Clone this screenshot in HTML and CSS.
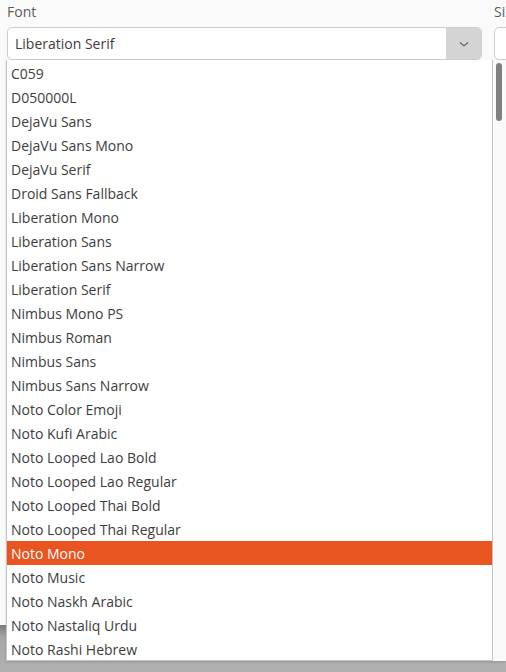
FILE: index.html
```html
<!DOCTYPE html>
<html>
<head>
    <link rel="stylesheet" href="styles.css">
</head>
<body>
    <div class="dialog">
        <div class="fields">
            <div class="field field-font">
                <div class="label">Font</div>
                <div class="combo">
                    <div class="combo-value">Liberation Serif</div>
                    <div class="combo-button">
                        <svg width="12" height="8" viewBox="0 0 12 8"><path d="M2 2.5 L6 5.8 L10 2.5" fill="none" stroke="#555" stroke-width="1.1"/></svg>
                    </div>
                </div>
            </div>
            <div class="field field-size">
                <div class="label">Size</div>
                <div class="combo combo-small"></div>
            </div>
        </div>
        <div class="lower"></div>
    </div>

    <!-- 字体下拉列表 -->
    <div class="popup">
        <ul class="font-list">
            <li>C059</li>
            <li>D050000L</li>
            <li>DejaVu Sans</li>
            <li>DejaVu Sans Mono</li>
            <li>DejaVu Serif</li>
            <li>Droid Sans Fallback</li>
            <li>Liberation Mono</li>
            <li>Liberation Sans</li>
            <li>Liberation Sans Narrow</li>
            <li>Liberation Serif</li>
            <li>Nimbus Mono PS</li>
            <li>Nimbus Roman</li>
            <li>Nimbus Sans</li>
            <li>Nimbus Sans Narrow</li>
            <li>Noto Color Emoji</li>
            <li>Noto Kufi Arabic</li>
            <li>Noto Looped Lao Bold</li>
            <li>Noto Looped Lao Regular</li>
            <li>Noto Looped Thai Bold</li>
            <li>Noto Looped Thai Regular</li>
            <li class="selected">Noto Mono</li>
            <li>Noto Music</li>
            <li>Noto Naskh Arabic</li>
            <li>Noto Nastaliq Urdu</li>
            <li>Noto Rashi Hebrew</li>
        </ul>
        <div class="scrollbar">
            <div class="thumb"></div>
        </div>
    </div>
</body>
</html>
```
FILE: styles.css
```css
body {
    margin: 0;
    background: #fafafa;
    font-family: "Open Sans", "Noto Sans", sans-serif;
    font-size: 14px;
    color: #3d3d3d;
    overflow: hidden;
}

.dialog {
    width: 506px;
    height: 672px;
    display: flex;
    flex-direction: column;
}

.fields {
    display: flex;
    gap: 12px;
    padding: 2px 0 0 7px;
}

.label {
    color: #5c5c5c;
    height: 25px;
    line-height: 20px;
}

.field-font {
    width: 475px;
    flex-shrink: 0;
}

.field-size {
    width: 60px;
    flex-shrink: 0;
}

.combo {
    height: 31px;
    border: 1px solid #cdcdcd;
    border-radius: 5px;
    background: #fff;
    display: flex;
    overflow: hidden;
}

.combo-value {
    flex: 1;
    padding-left: 7px;
    line-height: 31px;
}

.combo-button {
    width: 35px;
    background: #d4d4d4;
    display: flex;
    align-items: center;
    justify-content: center;
}

.lower {
    margin-top: auto;
    height: 47px;
    background: linear-gradient(#7b7b7b, #a6a6a6 12px, #b2b2b2);
}

/* 弹出列表，覆盖在对话框上方 */
.popup {
    position: absolute;
    left: 6px;
    top: 60px;
    width: 500px;
    height: 601px;
    display: flex;
    box-shadow: 0 1px 2px rgba(0, 0, 0, 0.15);
}

.font-list {
    list-style: none;
    margin: 0;
    padding: 1px 0 0;
    flex: 1;
    background: #fff;
    border: 1px solid #c4c4c4;
    border-top: none;
    overflow: hidden;
}

.font-list li {
    height: 24px;
    line-height: 25px;
    padding-left: 4px;
    white-space: nowrap;
}

.font-list li.selected {
    background: #e95420;
    color: #fff;
}

.scrollbar {
    width: 13px;
    background: #f9f9f9;
    padding-top: 3px;
}

.thumb {
    margin-left: 3px;
    width: 6px;
    height: 58px;
    border-radius: 3px;
    background: #7f7f7f;
}
```
